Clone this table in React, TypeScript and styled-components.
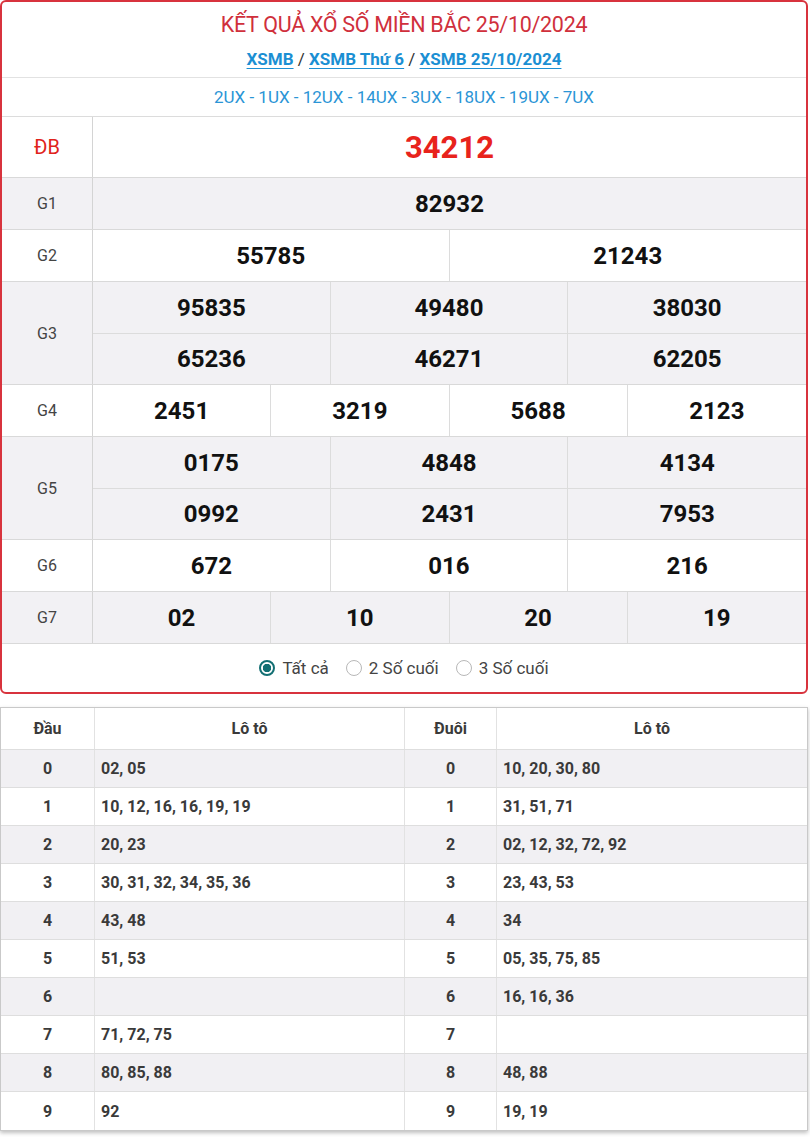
import React from 'react';
import styled, { createGlobalStyle } from 'styled-components';

const GlobalStyle = createGlobalStyle`
  html, body {
    margin: 0;
    padding: 0;
    background: #fff;
    font-family: Roboto, "Noto Sans", Arial, sans-serif;
  }
`;

type Prize = { label: string; nums: string[]; cols: number; special?: boolean };

const prizes: Prize[] = [
  { label: 'ĐB', nums: ['34212'], cols: 1, special: true },
  { label: 'G1', nums: ['82932'], cols: 1 },
  { label: 'G2', nums: ['55785', '21243'], cols: 2 },
  { label: 'G3', nums: ['95835', '49480', '38030', '65236', '46271', '62205'], cols: 3 },
  { label: 'G4', nums: ['2451', '3219', '5688', '2123'], cols: 4 },
  { label: 'G5', nums: ['0175', '4848', '4134', '0992', '2431', '7953'], cols: 3 },
  { label: 'G6', nums: ['672', '016', '216'], cols: 3 },
  { label: 'G7', nums: ['02', '10', '20', '19'], cols: 4 },
];

const loto: [string, string, string, string][] = [
  ['0', '02, 05', '0', '10, 20, 30, 80'],
  ['1', '10, 12, 16, 16, 19, 19', '1', '31, 51, 71'],
  ['2', '20, 23', '2', '02, 12, 32, 72, 92'],
  ['3', '30, 31, 32, 34, 35, 36', '3', '23, 43, 53'],
  ['4', '43, 48', '4', '34'],
  ['5', '51, 53', '5', '05, 35, 75, 85'],
  ['6', '', '6', '16, 16, 36'],
  ['7', '71, 72, 75', '7', ''],
  ['8', '80, 85, 88', '8', '48, 88'],
  ['9', '92', '9', '19, 19'],
];

export default function App() {
  return (
    <Page>
      <GlobalStyle />
      <ResultCard>
        <Title>KẾT QUẢ XỔ SỐ MIỀN BẮC 25/10/2024</Title>
        <Crumbs>
          <a>XSMB</a> / <a>XSMB Thứ 6</a> / <a>XSMB 25/10/2024</a>
        </Crumbs>
        <Codes>2UX - 1UX - 12UX - 14UX - 3UX - 18UX - 19UX - 7UX</Codes>
        {prizes.map((p, i) => (
          <PrizeRow key={p.label} $alt={i % 2 === 1}>
            <Label $special={p.special}>{p.label}</Label>
            <NumGrid $cols={p.cols}>
              {p.nums.map((n, j) => (
                <Num key={j} $special={p.special} $lastCol={(j + 1) % p.cols === 0} $firstRow={j < p.cols}>
                  {n}
                </Num>
              ))}
            </NumGrid>
          </PrizeRow>
        ))}
        <Filter>
          <Option><Radio $on />Tất cả</Option>
          <Option><Radio />2 Số cuối</Option>
          <Option><Radio />3 Số cuối</Option>
        </Filter>
      </ResultCard>

      <LotoCard>
        <LotoRow $head>
          <LotoCell $center>Đầu</LotoCell>
          <LotoCell $center>Lô tô</LotoCell>
          <LotoCell $center>Đuôi</LotoCell>
          <LotoCell $center $last>Lô tô</LotoCell>
        </LotoRow>
        {loto.map((r, i) => (
          <LotoRow key={i} $alt={i % 2 === 0}>
            <LotoCell $center>{r[0]}</LotoCell>
            <LotoCell>{r[1]}</LotoCell>
            <LotoCell $center>{r[2]}</LotoCell>
            <LotoCell $last>{r[3]}</LotoCell>
          </LotoRow>
        ))}
      </LotoCard>
    </Page>
  );
}

const Page = styled.div`
  width: 810px;
  padding-bottom: 6px;
`;

const ResultCard = styled.div`
  width: 808px;
  box-sizing: border-box;
  border: 2px solid #d8333d;
  border-radius: 6px;
  overflow: hidden;
  background: #fff;
`;

const Title = styled.h1`
  margin: 0;
  padding-top: 10px;
  height: 31px;
  text-align: center;
  font-size: 21.5px;
  line-height: 26px;
  font-weight: 400;
  color: #d0303c;
  letter-spacing: -0.3px;
`;

const Crumbs = styled.div`
  height: 35px;
  line-height: 32px;
  box-sizing: border-box;
  text-align: center;
  font-size: 17px;
  color: #333;
  border-bottom: 1px solid #e2e2e2;
  a {
    color: #1b8fd3;
    font-weight: 700;
    text-decoration: underline;
    text-underline-offset: 3px;
  }
`;

const Codes = styled.div`
  height: 39px;
  line-height: 38px;
  box-sizing: border-box;
  text-align: center;
  font-size: 17px;
  color: #2b95d6;
  border-bottom: 1px solid #dcdcdc;
`;

const PrizeRow = styled.div<{ $alt?: boolean }>`
  display: flex;
  background: ${(p) => (p.$alt ? '#f2f1f4' : '#fff')};
  border-bottom: 1px solid #d9d9d9;
`;

const Label = styled.div<{ $special?: boolean }>`
  width: 90px;
  flex: none;
  display: flex;
  align-items: center;
  justify-content: center;
  border-right: 1px solid #d4d4d4;
  font-size: ${(p) => (p.$special ? '20px' : '16px')};
  color: ${(p) => (p.$special ? '#e0231b' : '#444')};
`;

const NumGrid = styled.div<{ $cols: number }>`
  flex: 1;
  display: grid;
  grid-template-columns: repeat(${(p) => p.$cols}, 1fr);
`;

const Num = styled.div<{ $special?: boolean; $lastCol?: boolean; $firstRow?: boolean }>`
  height: ${(p) => (p.$special ? '60px' : '51px')};
  display: flex;
  align-items: center;
  justify-content: center;
  font-weight: 700;
  font-size: ${(p) => (p.$special ? '31px' : '24px')};
  color: ${(p) => (p.$special ? '#e8231c' : '#111')};
  border-right: ${(p) => (p.$lastCol ? 'none' : '1px solid #dcdcdc')};
  border-top: ${(p) => (p.$firstRow ? 'none' : '1px solid #dcdcdc')};
  box-sizing: border-box;
`;

const Filter = styled.div`
  height: 48px;
  display: flex;
  align-items: center;
  justify-content: center;
  gap: 17px;
  font-size: 17px;
  color: #444;
`;

const Option = styled.label`
  display: flex;
  align-items: center;
  gap: 7px;
`;

const Radio = styled.span<{ $on?: boolean }>`
  width: 16px;
  height: 16px;
  box-sizing: border-box;
  border-radius: 50%;
  border: ${(p) => (p.$on ? '2px solid #136f73' : '1px solid #b8b8b8')};
  background: ${(p) => (p.$on ? 'radial-gradient(circle, #136f73 0 4px, #fff 4.5px)' : '#fff')};
`;

const LotoCard = styled.div`
  margin-top: 13px;
  width: 808px;
  box-sizing: border-box;
  border: 1px solid #c9c9c9;
  box-shadow: 0 2px 4px rgba(0, 0, 0, 0.25);
  background: #fff;
`;

const LotoRow = styled.div<{ $head?: boolean; $alt?: boolean }>`
  display: grid;
  grid-template-columns: 94px 310px 92px 1fr;
  height: ${(p) => (p.$head ? '42px' : '38px')};
  background: ${(p) => (p.$alt ? '#f1f0f3' : '#fff')};
  border-bottom: 1px solid #dedede;
  box-sizing: border-box;
  &:last-child {
    border-bottom: none;
  }
`;

const LotoCell = styled.div<{ $center?: boolean; $last?: boolean }>`
  display: flex;
  align-items: center;
  justify-content: ${(p) => (p.$center ? 'center' : 'flex-start')};
  padding-left: ${(p) => (p.$center ? '0' : '6px')};
  border-right: ${(p) => (p.$last ? 'none' : '1px solid #e2e2e2')};
  font-size: 16px;
  font-weight: 700;
  color: #3a3a3a;
`;
